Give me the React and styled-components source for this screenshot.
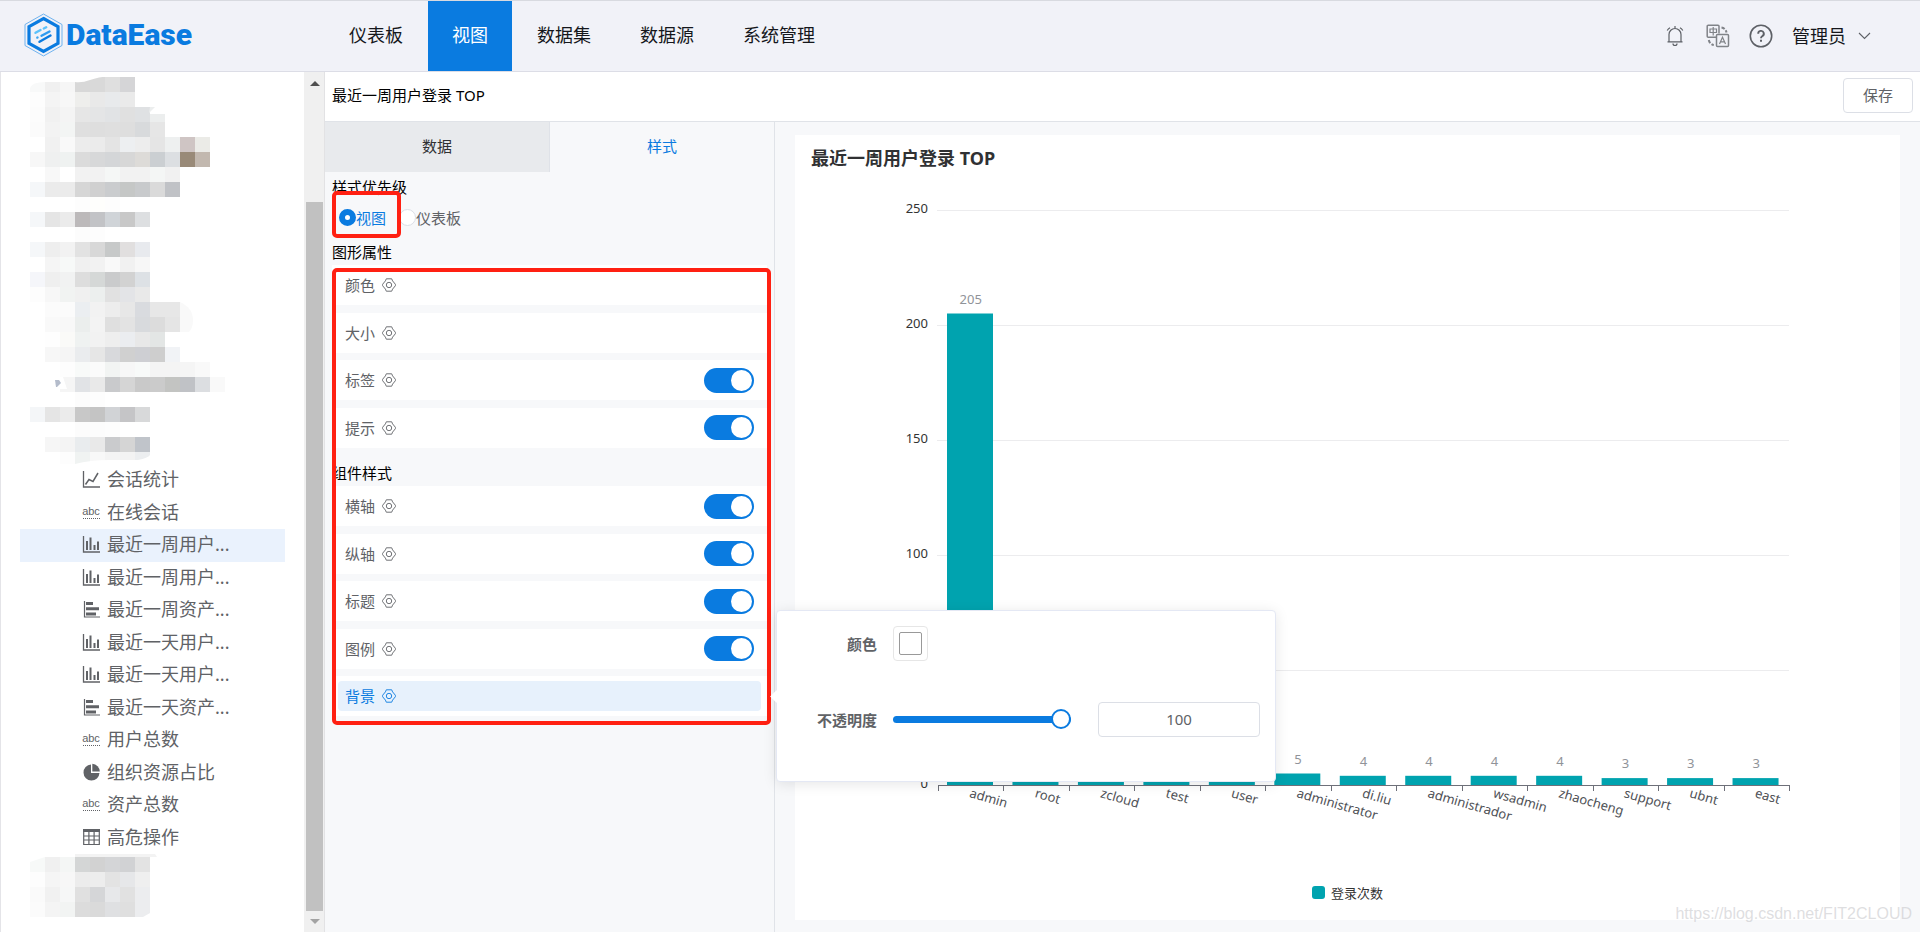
import React, { useState } from "react";
import styled, { createGlobalStyle, css } from "styled-components";

const c = {
  blue: "#0a7be0",
  border: "#dcdfe6",
  line: "#e0e3e8",
  panel: "#f7f8fa",
  text: "#606266",
  teal: "#00a3af",
  red: "#ff2012",
};

const GlobalStyle = createGlobalStyle`
  *, *::before, *::after { box-sizing: border-box; }
  body { margin: 0; background: #fff; }
  body, button, input {
    font-family: "Noto Sans", "Noto Sans CJK SC", sans-serif;
    font-weight: 400;
  }
  h1, h2, ul { margin: 0; padding: 0; }
  ul { list-style: none; }
`;

const Page = styled.div`
  position: relative;
  display: flex;
  flex-direction: column;
  min-height: 100vh;
  color: #000;
  font-size: 15px;
  line-height: 20px;
`;

/* ---------- header ---------- */

const Header = styled.header`
  display: flex;
  height: 72px;
  background: #f1f2f8;
  border-top: 1px solid #d8dae0;
  border-bottom: 1px solid #dcdde6;
`;

const Brand = styled.a`
  display: flex;
  align-items: center;
  gap: 3px;
  width: 325px;
  padding: 0 0 2px 24px;
  color: ${c.blue};
  font-family: Roboto, "Liberation Sans", sans-serif;
  font-size: 30px;
  font-weight: 900;
  line-height: 40px;
  text-decoration: none;
`;

const Nav = styled.nav`
  display: flex;
  flex: 1;
  gap: 1px;
`;

const NavLink = styled.a`
  display: flex;
  align-items: center;
  padding: 0 24px 2px;
  font-size: 18px;
  text-decoration: none;
  color: ${(p) => (p.$active ? "#fff" : "#15171c")};
  background: ${(p) => (p.$active ? c.blue : "transparent")};
`;

const Tools = styled.div`
  display: flex;
  align-items: center;
  gap: 19px;
  padding-right: 49px;
`;

const ToolButton = styled.button`
  display: flex;
  align-items: center;
  justify-content: center;
  gap: 12px;
  min-width: 24px;
  padding: 0;
  border: 0;
  background: none;
  color: #15171c;
  font-size: 18px;
  line-height: 24px;
`;

/* ---------- sidebar ---------- */

const Body = styled.div`
  display: flex;
  flex: 1;
`;

const Sidebar = styled.aside`
  display: flex;
  flex: none;
  width: 325px;
  border-left: 1px solid #e4e4e8;
  border-right: 1px solid #e2e2e4;
`;

const Tree = styled.div`
  display: flex;
  flex: 1;
  flex-direction: column;
  min-width: 0;
`;

const Mosaic = styled.svg`
  display: block;
  flex: none;
  margin-left: 29px;
`;

const TreeList = styled.ul`
  display: grid;
  grid-auto-rows: 1fr;
  height: 390px;
  margin: 0 19px;
`;

const TreeLink = styled.a`
  display: flex;
  align-items: center;
  gap: 7px;
  height: 100%;
  padding: 0 0 2px 62px;
  color: ${c.text};
  background: ${(p) => (p.$active ? "#eaf2fd" : "transparent")};
  font-size: 18px;
  line-height: 24px;
  text-decoration: none;
`;

const ScrollTrack = styled.div`
  display: flex;
  flex-direction: column;
  align-items: center;
  width: 20px;
  padding: 9px 1px 8px 2px;
  background: #f0f0f0;
`;

const ScrollThumb = styled.div`
  flex: 1;
  width: 17px;
  margin: 116px 0 8px;
  background: #c1c1c1;
`;

const Arrow = styled.span`
  width: 0;
  height: 0;
  border: 5px solid transparent;
  ${(p) =>
    p.$down
      ? css`border-top-color: #a3a3a3; border-bottom: 0;`
      : css`border-bottom-color: #505050; border-top: 0;`}
`;

/* ---------- editor ---------- */

const Editor = styled.main`
  display: flex;
  flex: 1;
  flex-direction: column;
  min-width: 0;
`;

const TitleBar = styled.div`
  display: flex;
  align-items: center;
  justify-content: space-between;
  height: 50px;
  padding: 0 7px 2px;
  border-bottom: 1px solid ${c.line};
`;

const ViewName = styled.h1`
  padding-bottom: 2px;
  font-size: 15px;
  font-weight: 400;
  line-height: 20px;
`;

const SaveButton = styled.button`
  width: 70px;
  height: 35px;
  padding: 0 0 2px;
  border: 1px solid ${c.border};
  border-radius: 4px;
  background: #fff;
  color: ${c.text};
  font-size: 15px;
`;

const Workspace = styled.div`
  display: flex;
  flex: 1;
  background: ${c.panel};
`;

const StylePanel = styled.section`
  position: relative;
  flex: none;
  width: 450px;
  border-right: 1px solid ${c.line};
`;

const Tabs = styled.div`
  display: flex;
  height: 50px;
`;

const Tab = styled.button`
  flex: 1;
  padding: 0 0 4px;
  border: 0;
  border-right: ${(p) => (p.$active ? "0" : "1px solid #dfe2e8")};
  background: ${(p) => (p.$active ? c.panel : "#e8eaed")};
  color: ${(p) => (p.$active ? c.blue : "#303133")};
  font-size: 15px;
`;

const PanelBody = styled.div`
  padding: 5px 7px;
`;

const GroupTitle = styled.h2`
  margin-bottom: ${(p) => (p.$spaced ? "3px" : "0")};
  font-size: 15px;
  font-weight: 400;
  line-height: 20px;
`;

const RadioRow = styled.div`
  position: relative;
  display: flex;
  align-items: center;
  gap: 13px;
  height: 41px;
  margin-bottom: 4px;
  padding-left: 7px;
`;

const RadioLabel = styled.label`
  display: flex;
  align-items: center;
  color: ${c.text};
  &:has(input:checked) { color: ${c.blue}; }
`;

const Radio = styled.input`
  appearance: none;
  width: 17px;
  height: 17px;
  margin: 0;
  border: 1px solid ${c.border};
  border-radius: 50%;
  background: #fff;
  &:checked { border: 6px solid ${c.blue}; }
`;

const Rows = styled.ul`
  display: grid;
  grid-auto-rows: 40px;
  align-content: space-between;
  height: ${(p) => (p.$count === 5 ? 230 : 183)}px;
  margin-bottom: 15px;
`;

const Row = styled.li`
  position: relative;
  padding: 5px 6px;
  background: #fff;
`;

const RowInner = styled.div`
  display: flex;
  align-items: center;
  justify-content: space-between;
  height: 30px;
  padding: 0 7px;
  border-radius: 4px;
  background: ${(p) => (p.$active ? "#e7f1fc" : "#fff")};
`;

const RowButton = styled.button`
  display: flex;
  align-items: center;
  gap: 7px;
  padding: 0;
  border: 0;
  background: none;
  color: ${(p) => (p.$active ? c.blue : c.text)};
  font-size: 15px;
  line-height: 20px;
`;

const Switch = styled.input`
  appearance: none;
  width: 50px;
  height: 25px;
  margin: 0;
  padding: 2px;
  border-radius: 13px;
  background: #c0c4cc;
  &::before {
    content: "";
    display: block;
    width: 21px;
    height: 21px;
    border-radius: 50%;
    background: #fff;
  }
  &:checked { background: ${c.blue}; }
  &:checked::before { margin-left: auto; }
`;

const Outline = styled.div`
  position: absolute;
  pointer-events: none;
  border: 4px solid ${c.red};
  border-radius: 5px;
`;

const RadioOutline = styled(Outline)`
  top: -6px;
  left: 0;
  width: 69px;
  height: 47px;
`;

const RowsOutline = styled(Outline)`
  top: 146px;
  left: 7px;
  right: 3px;
  height: 457px;
`;

/* ---------- popover ---------- */

const Popover = styled.div`
  position: absolute;
  z-index: 2;
  top: -66px;
  left: calc(100% + 9px);
  width: 500px;
  height: 172px;
  padding: 15px 15px 15px 16px;
  border: 1px solid #e4e8f4;
  border-radius: 4px;
  background: #fff;
  box-shadow: 0 2px 14px rgba(0, 0, 0, 0.1);
  color: ${c.text};
  &::before {
    content: "";
    position: absolute;
    top: 81px;
    left: -5px;
    width: 9px;
    height: 9px;
    background: #fff;
    transform: rotate(45deg);
  }
`;

const Field = styled.div`
  display: grid;
  grid-template-columns: 84px 178px 1fr;
  align-items: center;
  column-gap: 16px;
  height: 35px;
  margin-bottom: 41px;
`;

const FieldLabel = styled.label`
  text-align: right;
  font-weight: 600;
`;

const Swatch = styled.button`
  display: grid;
  place-items: center;
  width: 35px;
  height: 35px;
  padding: 0;
  border: 1px solid #e6e6e6;
  border-radius: 4px;
  background: #fff;
  &::before {
    content: "";
    width: 23px;
    height: 23px;
    border: 1px solid #999;
    border-radius: 2px;
  }
`;

const Slider = styled.input`
  appearance: none;
  width: 100%;
  height: 20px;
  margin: 0;
  background: none;
  &::-webkit-slider-runnable-track {
    height: 7px;
    border-radius: 4px;
    background: ${c.blue};
  }
  &::-webkit-slider-thumb {
    appearance: none;
    width: 20px;
    height: 20px;
    margin-top: -7px;
    border: 2px solid ${c.blue};
    border-radius: 50%;
    background: #fff;
  }
`;

const NumberBox = styled.input`
  width: 162px;
  height: 35px;
  justify-self: end;
  padding: 0 0 2px;
  border: 1px solid ${c.border};
  border-radius: 4px;
  color: ${c.text};
  font-size: 15px;
  text-align: center;
`;

/* ---------- chart ---------- */

const ChartCard = styled.section`
  display: flex;
  flex: 1;
  flex-direction: column;
  min-width: 0;
  margin: 13px 20px 12px;
  background: #fff;
`;

const ChartTitle = styled.h2`
  height: 45px;
  padding: 11px 16px;
  color: #303133;
  font-size: 18px;
  font-weight: 700;
  line-height: 24px;
`;

const Plot = styled.svg`
  display: block;
  width: 100%;
  height: 700px;
  font-size: 13px;
`;

const Legend = styled.div`
  display: flex;
  align-items: center;
  justify-content: center;
  gap: 6px;
  height: 25px;
  color: #333;
  font-size: 13px;
  &::before {
    content: "";
    width: 13px;
    height: 13px;
    border-radius: 3px;
    background: ${c.teal};
  }
`;

const Watermark = styled.span`
  position: absolute;
  right: 8px;
  bottom: 8px;
  color: rgba(200, 200, 204, 0.6);
  font-family: "Liberation Sans", sans-serif;
  font-size: 16px;
  line-height: 20px;
`;

/* ---------- drawings ---------- */

const LogoMark = () => (
  <svg width="39" height="44" viewBox="0 0 39 44" fill="none" aria-hidden="true">
    <path d="M19.500 1 38 11.500V32.500L19.500 43 1 32.500V11.500Z" stroke="#6fb2ef" strokeWidth="1" />
    <path d="M19.500 5.500 34 13.700V30.300L19.500 38.500 5 30.300V13.700Z" stroke={c.blue} strokeWidth="3.200" />
    <g strokeWidth="2.400" strokeLinecap="round">
      <path d="M11.500 19.800 16.500 17" stroke="#5cc2fb" />
      <path d="M19.800 15.500 22.200 14.200" stroke="#5cc2fb" />
      <path d="M13.300 24.600 13.500 24.500" stroke="#3ba6f3" />
      <path d="M17.500 22.700 25.500 18.500" stroke="#2f9bf0" />
      <path d="M15.500 28.800 26.500 22.500" stroke={c.blue} />
    </g>
  </svg>
);

const BellIcon = () => (
  <svg width="18" height="22" viewBox="0 0 18 22" fill="none" stroke="#5d6066" strokeWidth="1.200" aria-hidden="true">
    <path d="M3 16.500V9.500A6 6 0 0 1 15 9.500V16.500M1.500 16.800H16.500M9 1V3.500M7 18.500A2 2 0 0 0 11 18.500M1.200 5.500A8 8 0 0 1 4 2.800M14 2.800A8 8 0 0 1 16.800 5.500" />
  </svg>
);

const TranslateIcon = () => (
  <svg width="24" height="24" viewBox="0 0 24 24" fill="none" stroke="#808388" strokeWidth="1.500" aria-hidden="true">
    <path d="M10.500 13.200H2.200A1 1 0 0 1 1.200 12.200V2.200A1 1 0 0 1 2.200 1.200H12A1 1 0 0 1 13 2.200V9.500" />
    <rect x="10.500" y="10.500" width="12" height="12" rx="1" />
    <path d="M4 5H10.500V8.500H4ZM7.200 3V11.500" strokeWidth="1.200" />
    <path d="M13.500 20 16.500 13.200 19.500 20M14.500 17.800H18.500" strokeWidth="1.200" />
    <path d="M15.500 3.500A6 6 0 0 1 20.500 8.500M2.800 16A6 6 0 0 0 7.800 21" strokeWidth="2" strokeDasharray="3.500 1.500" />
  </svg>
);

const HelpIcon = () => (
  <svg width="24" height="24" viewBox="0 0 24 24" fill="none" stroke="#5d6066" strokeWidth="1.600" aria-hidden="true">
    <circle cx="12" cy="12" r="10.700" />
    <path d="M9.200 9.800A2.800 2.800 0 1 1 13.200 12.200Q12 12.900 12 14.300" strokeWidth="1.900" />
    <path d="M12 15.800V17.800" strokeWidth="2" />
  </svg>
);

const ChevronIcon = () => (
  <svg width="13" height="8" viewBox="0 0 13 8" fill="none" stroke="#5d6066" strokeWidth="1.100" aria-hidden="true">
    <path d="M1 1 6.500 6.500 12 1" />
  </svg>
);

const GearIcon = () => (
  <svg width="14" height="14" viewBox="0 0 14 14" fill="none" stroke="currentColor" strokeWidth="0.900" aria-hidden="true">
    <path d="M4.300 .8H9.700L10.600 2.900 13.400 6.300V7.700L10.600 11.100 9.700 13.200H4.300L3.400 11.100 .6 7.700V6.300L3.400 2.900Z" strokeLinejoin="round" />
    <circle cx="7" cy="7" r="2.700" />
  </svg>
);

const treeIcons = {
  line: (
    <g fill="none" stroke="currentColor">
      <path d="M1.500 1V17H18" strokeWidth="1.300" />
      <path d="M3.500 14.500 7 9.500 11 11.500 16 3" strokeWidth="1.500" />
    </g>
  ),
  text: (
    <g>
      <text x="9" y="12" textAnchor="middle" fill="currentColor" fontSize="11" fontFamily="Liberation Sans, sans-serif">abc</text>
      <path d="M1 15.500H18" stroke="currentColor" strokeDasharray="1 1" />
    </g>
  ),
  bar: (
    <g fill="none" stroke="currentColor">
      <path d="M1.500 1V17H18" strokeWidth="1.300" />
      <path d="M5 6V15M8.500 2.500V15M12.500 10V15M16 6.500V15" strokeWidth="2" />
    </g>
  ),
  barH: (
    <g fill="none" stroke="currentColor">
      <path d="M2.500 1V17H18" strokeWidth="1.200" />
      <path d="M4 3.500H11M4 8.800H17M4 14H14" strokeWidth="3" />
    </g>
  ),
  pie: (
    <g fill="currentColor">
      <path d="M9 1.500A8 8 0 1 0 17.500 10H9Z" />
      <path d="M10.300 .8A8 8 0 0 1 17.800 8.600H10.300Z" />
    </g>
  ),
  table: (
    <g fill="none" stroke="currentColor">
      <path d="M1.700 2V16.500H17.300V2M1.700 8H17.300M1.700 12H17.300M6.900 4V16.500M12.100 4V16.500" strokeWidth="1.200" />
      <path d="M1 2.500H18" strokeWidth="3" />
    </g>
  ),
};

const TreeIcon = ({ kind }) => (
  <svg width="18" height="18" viewBox="0 0 18 18" aria-hidden="true">
    {treeIcons[kind]}
  </svg>
);

/* Redacted tree labels: one line per row of 15px tiles, "-" leaves a tile out. */
const upperTiles = [
  "f8f9f9 f0f0f0 f6f6f6 d8d8d8 d9d9d9 dfdfdf d5d5d7",
  "fdfdfd f4f4f4 f7f7f7 eeeeec e9e9e9 e8eaec eaeaea",
  "fcfcfc f1f1f1 f4f4f4 e6e6e6 e4e5e6 e1e3e5 e0e0e0 dfe1e3",
  "fbfbfb f3f3f3 f3f5f4 dfdfdf dedede dfdfdf dedede d8dadc e6e6e6",
  "- f1f1f1 f9f9f9 ececec ebebeb e4e4e4 edeff1 ededed e5e5e5 eef0f0 cfc5c4 ebebe7",
  "f7f7f7 eff0f0 eff2f1 dbdbdb d7d8d9 d4d6d8 d7d7d7 dddbd8 cbcfd2 dcdfe2 998a78 c2b8af",
  "- f8f8f8 - f2f2f2 f2f2f2 f5f7f6 f2f2f2 f2f2f2 f4f6f5 f1f1f1",
  "f5f7f9 ebebeb ebebeb d6d6d6 d0d0d0 caccce c5c7c6 c8cacc dadada c0c2c6",
  "- - - fdfdfd fefefc fdfdfd",
  "f5f7f9 e5e5e5 ebebeb bcb9ba c2c3c6 d0d4d8 c8c8c8 dddfe1",
  "- - - fcfcfc fdfdfd",
  "f5f7f9 eeeeee f2f2f2 e2e2e2 d8d8d8 c7c9c9 e1dfdf e8eaee",
  "- f5f5f5 f7f9f8 f0f0f0 f2f2f2 f9f9f9 f1f1f1 f7f7f7",
  "f5f6fa efefef f1f2f2 dddddd d5d8d7 cacbcc d2d2d2 dde1e5",
  "fdfdfd f7f7f7 f1f3f2 f0f0f0 ecefee e1e1e1 e3e4e7 e9e9e9",
  "- fbfbfb fbfbfb ebeef1 f2f2f2 ededed e7e7e7 d9dbdf e7e7e7 e7e7e7",
  "- f9f9f9 f8f8f8 ebeeed f3f3f3 dfdfdf e3e3e3 d8dadd dcdcdc e5e5e5",
  "- fefefe fafaf8 eff2f1 f2f2f2 eeeeee ebedf0 e8e8e8 e3e6e5",
  "- f7f7f7 f5f5f5 eaecee e6e6e6 d8d9dc d0d0d0 cecfd3 cecece f1f3f6",
  "- - fdfdfd f8faf9 fbfbfb f2f4f3 f7f7f7 f8faf9 f4f4f4 f4f4f4 f5f5f5 f9f9f9",
  "- - f5f5f5 e1e3e6 e9e9e9 c9cacc d5d5d5 c9c9c9 cbcbcb c3c4c2 c0c2c6 dcdee1 f9f9f9",
  "- - - fcfcfc fdfdfd",
  "f4f6f8 e5e5e5 ebebeb c8c8c8 c4c4c4 d1d3d6 c5c5c7 d8d9da",
  "- - - fcfcfc fcfcfc fdfdfd",
  "- f6f6f6 f4f4f4 e9ecee e9e9e9 cacbcd d5d5d5 c0c4ca",
  "- - fdfdfd f0f3f2 f8f8f8 f4f4f4 f3f3f3 eceef0",
];

const lowerTiles = [
  "f7f9f8 f0f0f0 f4f6f5 d4d6d6 d2d2d2 d4d5d7 d1d2d4 e3e3e3",
  "fdfdfd f5f5f5 f7f7f7 ececec ededed e3e3e3 e6e7e9 efefef",
  "fafafa f1f1f1 f6f7f7 e0e0e0 d5d6d8 e7e8ea e1e1e1 ecedef",
  "fbfbfb f4f4f4 f2f4f3 dcdcdc dadada dfe0e2 dfdfdf ecedef",
];

const Tiles = ({ rows, top }) =>
  rows.flatMap((row, r) =>
    row.split(" ").map((hex, i) =>
      hex === "-" ? null : (
        <rect key={`${r}-${i}`} x={i * 15} y={top + r * 15} width="15" height="15" fill={`#${hex}`} />
      )
    )
  );

/* ---------- data ---------- */

const navItems = ["仪表板", "视图", "数据集", "数据源", "系统管理"];

const treeItems = [
  ["line", "会话统计"],
  ["text", "在线会话"],
  ["bar", "最近一周用户..."],
  ["bar", "最近一周用户..."],
  ["barH", "最近一周资产..."],
  ["bar", "最近一天用户..."],
  ["bar", "最近一天用户..."],
  ["barH", "最近一天资产..."],
  ["text", "用户总数"],
  ["pie", "组织资源占比"],
  ["text", "资产总数"],
  ["table", "高危操作"],
];

const graphRows = [
  { name: "颜色" },
  { name: "大小" },
  { name: "标签", toggle: true },
  { name: "提示", toggle: true },
];

const componentRows = [
  { name: "横轴", toggle: true },
  { name: "纵轴", toggle: true },
  { name: "标题", toggle: true },
  { name: "图例", toggle: true },
  { name: "背景", active: true },
];

const logins = [
  ["admin", 205],
  ["root", 9],
  ["zcloud", 8],
  ["test", 6],
  ["user", 6],
  ["administrator", 5],
  ["di.liu", 4],
  ["administrador", 4],
  ["wsadmin", 4],
  ["zhaocheng", 4],
  ["support", 3],
  ["ubnt", 3],
  ["east", 3],
];

/* ---------- parts ---------- */

function BackgroundPopover() {
  const [opacity, setOpacity] = useState(100);
  const update = (e) => setOpacity(Number(e.target.value) || 0);
  return (
    <Popover role="dialog" aria-label="背景">
      <Field>
        <FieldLabel htmlFor="bg-color">颜色</FieldLabel>
        <Swatch id="bg-color" type="button" />
      </Field>
      <Field>
        <FieldLabel htmlFor="bg-opacity">不透明度</FieldLabel>
        <Slider id="bg-opacity" type="range" min="0" max="100" value={opacity} onChange={update} />
        <NumberBox type="text" aria-label="不透明度" value={opacity} onChange={update} />
      </Field>
    </Popover>
  );
}

function SettingRows({ items }) {
  return (
    <Rows $count={items.length}>
      {items.map(({ name, toggle, active }) => (
        <Row key={name}>
          <RowInner $active={active}>
            <RowButton type="button" $active={active}>
              {name}
              <GearIcon />
            </RowButton>
            {toggle && <Switch type="checkbox" role="switch" aria-label={name} defaultChecked />}
          </RowInner>
          {active && <BackgroundPopover />}
        </Row>
      ))}
    </Rows>
  );
}

function LoginChart() {
  const left = 143;
  const right = 994;
  const base = 605;
  const unit = 2.3;
  const band = (right - left) / logins.length;
  return (
    <Plot viewBox="0 0 1105 700" role="img" aria-label="登录次数">
      {[0, 50, 100, 150, 200, 250].map((v) => {
        const y = base - v * unit;
        return (
          <g key={v}>
            {v > 0 && <rect x={left - 1} y={y} width={right - left + 1} height="1" fill="#ececee" />}
            <text x="133" y={y + 3} textAnchor="end" fill="#333">{v}</text>
          </g>
        );
      })}
      {logins.map(([name, value], i) => {
        const x = left + i * band;
        const mid = x + band / 2;
        const y = base - value * unit;
        return (
          <g key={name}>
            <rect x={x + 9} y={y} width="46" height={value * unit} fill={c.teal} />
            <text x={mid} y={y - 10} textAnchor="middle" fill="#909399">{value}</text>
            <text transform={`translate(${mid - 2} 617) rotate(16)`} fill="#505257">{name}</text>
          </g>
        );
      })}
      <rect x={left} y={base} width={right - left} height="1" fill="#6e7079" />
      {Array.from({ length: logins.length + 1 }, (_, i) => (
        <rect key={i} x={Math.round(left + i * band)} y={base} width="1" height="6" fill="#6e7079" />
      ))}
    </Plot>
  );
}

export default function App() {
  return (
    <Page>
      <GlobalStyle />
      <Header>
        <Brand href="#home">
          <LogoMark />
          DataEase
        </Brand>
        <Nav>
          {navItems.map((name) => (
            <NavLink key={name} href={`#${name}`} $active={name === "视图"}>{name}</NavLink>
          ))}
        </Nav>
        <Tools>
          <ToolButton type="button" aria-label="通知"><BellIcon /></ToolButton>
          <ToolButton type="button" aria-label="语言"><TranslateIcon /></ToolButton>
          <ToolButton type="button" aria-label="帮助"><HelpIcon /></ToolButton>
          <ToolButton type="button">管理员<ChevronIcon /></ToolButton>
        </Tools>
      </Header>
      <Body>
        <Sidebar>
          <Tree>
            <Mosaic width="200" height="392" viewBox="0 0 200 392" aria-hidden="true">
              <Tiles rows={upperTiles} top={5} />
              <path d="M0 0H105V4H80Q68 5 60 8T45 10H15Q2 10 0 16Z" fill="#fff" />
              <path d="M120 35H125L119 41ZM120 42H135V50H120Z" fill="#eceeee" />
              <path d="M150 230Q163 236 163 248 163 256 159 260H150Z" fill="#f9f9f9" />
              <path d="M30 305H33L37 317H30Z" fill="#fff" />
              <path d="M25 308H29L31 311 27 315H26Z" fill="#b4bccb" />
              <path d="M45 392Q60 388 80 388H108Q118 386 120 383V392Z" fill="#fff" />
            </Mosaic>
            <TreeList>
              {treeItems.map(([kind, name], i) => (
                <li key={i}>
                  <TreeLink href={`#view-${i}`} $active={i === 2}>
                    <TreeIcon kind={kind} />
                    {name}
                  </TreeLink>
                </li>
              ))}
            </TreeList>
            <Mosaic width="200" height="65" viewBox="0 0 200 65" aria-hidden="true">
              <path d="M45 3V0H125L127 3Z" fill="#f3f3f3" />
              <Tiles rows={lowerTiles} top={3} />
              <path d="M0 3H15L0 8ZM120 59V63H113Z" fill="#fff" />
            </Mosaic>
          </Tree>
          <ScrollTrack>
            <Arrow />
            <ScrollThumb />
            <Arrow $down />
          </ScrollTrack>
        </Sidebar>
        <Editor>
          <TitleBar>
            <ViewName>最近一周用户登录 TOP</ViewName>
            <SaveButton type="button">保存</SaveButton>
          </TitleBar>
          <Workspace>
            <StylePanel>
              <Tabs role="tablist">
                <Tab type="button" role="tab" aria-selected="false">数据</Tab>
                <Tab type="button" role="tab" aria-selected="true" $active>样式</Tab>
              </Tabs>
              <PanelBody>
                <GroupTitle>样式优先级</GroupTitle>
                <RadioRow>
                  <RadioLabel><Radio type="radio" name="priority" defaultChecked />视图</RadioLabel>
                  <RadioLabel><Radio type="radio" name="priority" />仪表板</RadioLabel>
                  <RadioOutline />
                </RadioRow>
                <GroupTitle $spaced>图形属性</GroupTitle>
                <SettingRows items={graphRows} />
                <GroupTitle $spaced>组件样式</GroupTitle>
                <SettingRows items={componentRows} />
              </PanelBody>
              <RowsOutline />
            </StylePanel>
            <ChartCard>
              <ChartTitle>最近一周用户登录 TOP</ChartTitle>
              <LoginChart />
              <Legend>登录次数</Legend>
            </ChartCard>
          </Workspace>
        </Editor>
      </Body>
      <Watermark>https://blog.csdn.net/FIT2CLOUD</Watermark>
    </Page>
  );
}
